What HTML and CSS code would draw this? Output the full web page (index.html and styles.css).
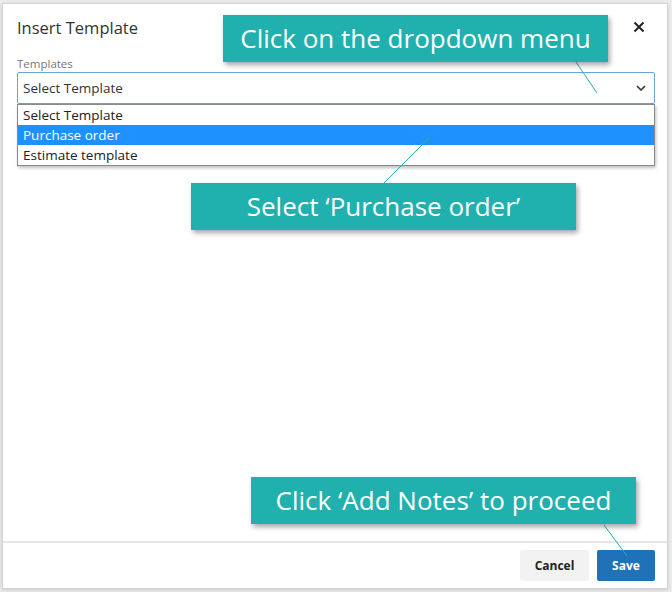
FILE: index.html
```html
<!DOCTYPE html>
<html>
<head>
<meta charset="utf-8">
<link rel="stylesheet" href="styles.css">
</head>
<body>
<div class="modal">
  <div class="modal-header">
    <h1 class="title">Insert Template</h1>
    <button class="close" aria-label="Close">
      <svg width="12" height="12" viewBox="0 0 12 12"><path d="M1.5 1.5 L10.5 10.5 M10.5 1.5 L1.5 10.5" stroke="#222" stroke-width="2" fill="none"/></svg>
    </button>
  </div>
  <div class="modal-body">
    <label class="label">Templates</label>
    <div class="select-wrap">
      <div class="select">
        <span>Select Template</span>
        <svg class="chevron" width="10" height="6" viewBox="0 0 10 6"><path d="M1 1 L5 5 L9 1" stroke="#333" stroke-width="1.6" fill="none"/></svg>
      </div>
      <ul class="options">
        <li>Select Template</li>
        <li class="active">Purchase order</li>
        <li>Estimate template</li>
      </ul>
    </div>
  </div>
  <div class="modal-footer">
    <button class="btn btn-cancel">Cancel</button>
    <button class="btn btn-save">Save</button>
  </div>
</div>

<svg class="leaders" width="672" height="592" viewBox="0 0 672 592">
  <line x1="576" y1="62" x2="597" y2="93" stroke="#22b2b0" stroke-width="1"/>
  <line x1="384" y1="183" x2="430" y2="137" stroke="#22b2b0" stroke-width="1"/>
  <line x1="604" y1="525" x2="627" y2="556" stroke="#22b2b0" stroke-width="1"/>
</svg>
<div class="callout callout-1">Click on the dropdown menu</div>
<div class="callout callout-2">Select ‘Purchase order’</div>
<div class="callout callout-3">Click ‘Add Notes’ to proceed</div>
</body>
</html>
```
FILE: styles.css
```css
html, body {
  margin: 0;
  padding: 0;
}
body {
  width: 672px;
  height: 592px;
  background: #ececec;
  font-family: "Segoe UI", "Open Sans", "Noto Sans", sans-serif;
  position: relative;
  overflow: hidden;
}
.modal {
  position: absolute;
  left: 2px;
  top: 3px;
  width: 664px;
  height: 584px;
  background: #fff;
  border: 1px solid #d4d4d4;
  box-shadow: 0 1px 4px rgba(0,0,0,0.15);
  display: flex;
  flex-direction: column;
}
.modal-header {
  display: flex;
  align-items: center;
  justify-content: space-between;
  padding: 5px 22px 0 14px;
  height: 36px;
}
.title {
  margin: 0;
  font-size: 16.5px;
  font-weight: 400;
  color: #333;
}
.close {
  background: none;
  border: none;
  padding: 0;
  width: 12px;
  height: 12px;
  display: flex;
}
.modal-body {
  flex: 1;
  padding: 12px 12px 0 14px;
}
.label {
  display: block;
  font-size: 11.5px;
  color: #777;
  line-height: 14px;
  margin-bottom: 1px;
}
.select-wrap {
  position: relative;
}
.select {
  height: 30px;
  border: 1px solid #6aa3d6;
  border-radius: 2px;
  display: flex;
  align-items: center;
  justify-content: space-between;
  padding: 0 8px 0 5px;
  font-size: 13.5px;
  color: #333;
}
.chevron {
  display: block;
}
.options {
  position: absolute;
  left: 0;
  right: 0;
  top: 32px;
  margin: 0;
  padding: 0;
  list-style: none;
  background: #fff;
  border: 1px solid #8a8a8a;
  box-shadow: 1px 2px 3px rgba(0,0,0,0.25);
}
.options li {
  height: 20px;
  line-height: 20px;
  padding-left: 5px;
  font-size: 13.5px;
  color: #222;
}
.options li.active {
  background: #1e90ff;
  color: #fff;
}
.modal-footer {
  border-top: 2px solid #e6e6e6;
  display: flex;
  justify-content: flex-end;
  gap: 8px;
  padding: 7px 12px 7px 0;
}
.btn {
  height: 31px;
  border: none;
  border-radius: 2px;
  font-family: "Segoe UI", "Open Sans", "Noto Sans", sans-serif;
  font-size: 12px;
  font-weight: 700;
  padding: 0;
}
.btn-cancel {
  width: 69px;
  background: #f2f2f2;
  color: #222;
}
.btn-save {
  width: 58px;
  background: #1f72b8;
  color: #fff;
}
.leaders {
  position: absolute;
  left: 0;
  top: 0;
  pointer-events: none;
}
.callout {
  position: absolute;
  width: 385px;
  height: 47px;
  background: #20b1af;
  color: #fff;
  font-family: "Open Sans", "Noto Sans", sans-serif;
  font-size: 26px;
  line-height: 47px;
  text-align: center;
  box-shadow: 2px 3px 5px rgba(0,0,0,0.35);
}
.callout-1 { left: 223px; top: 15px; }
.callout-2 { left: 191px; top: 183px; }
.callout-3 { left: 251px; top: 477px; }
```
